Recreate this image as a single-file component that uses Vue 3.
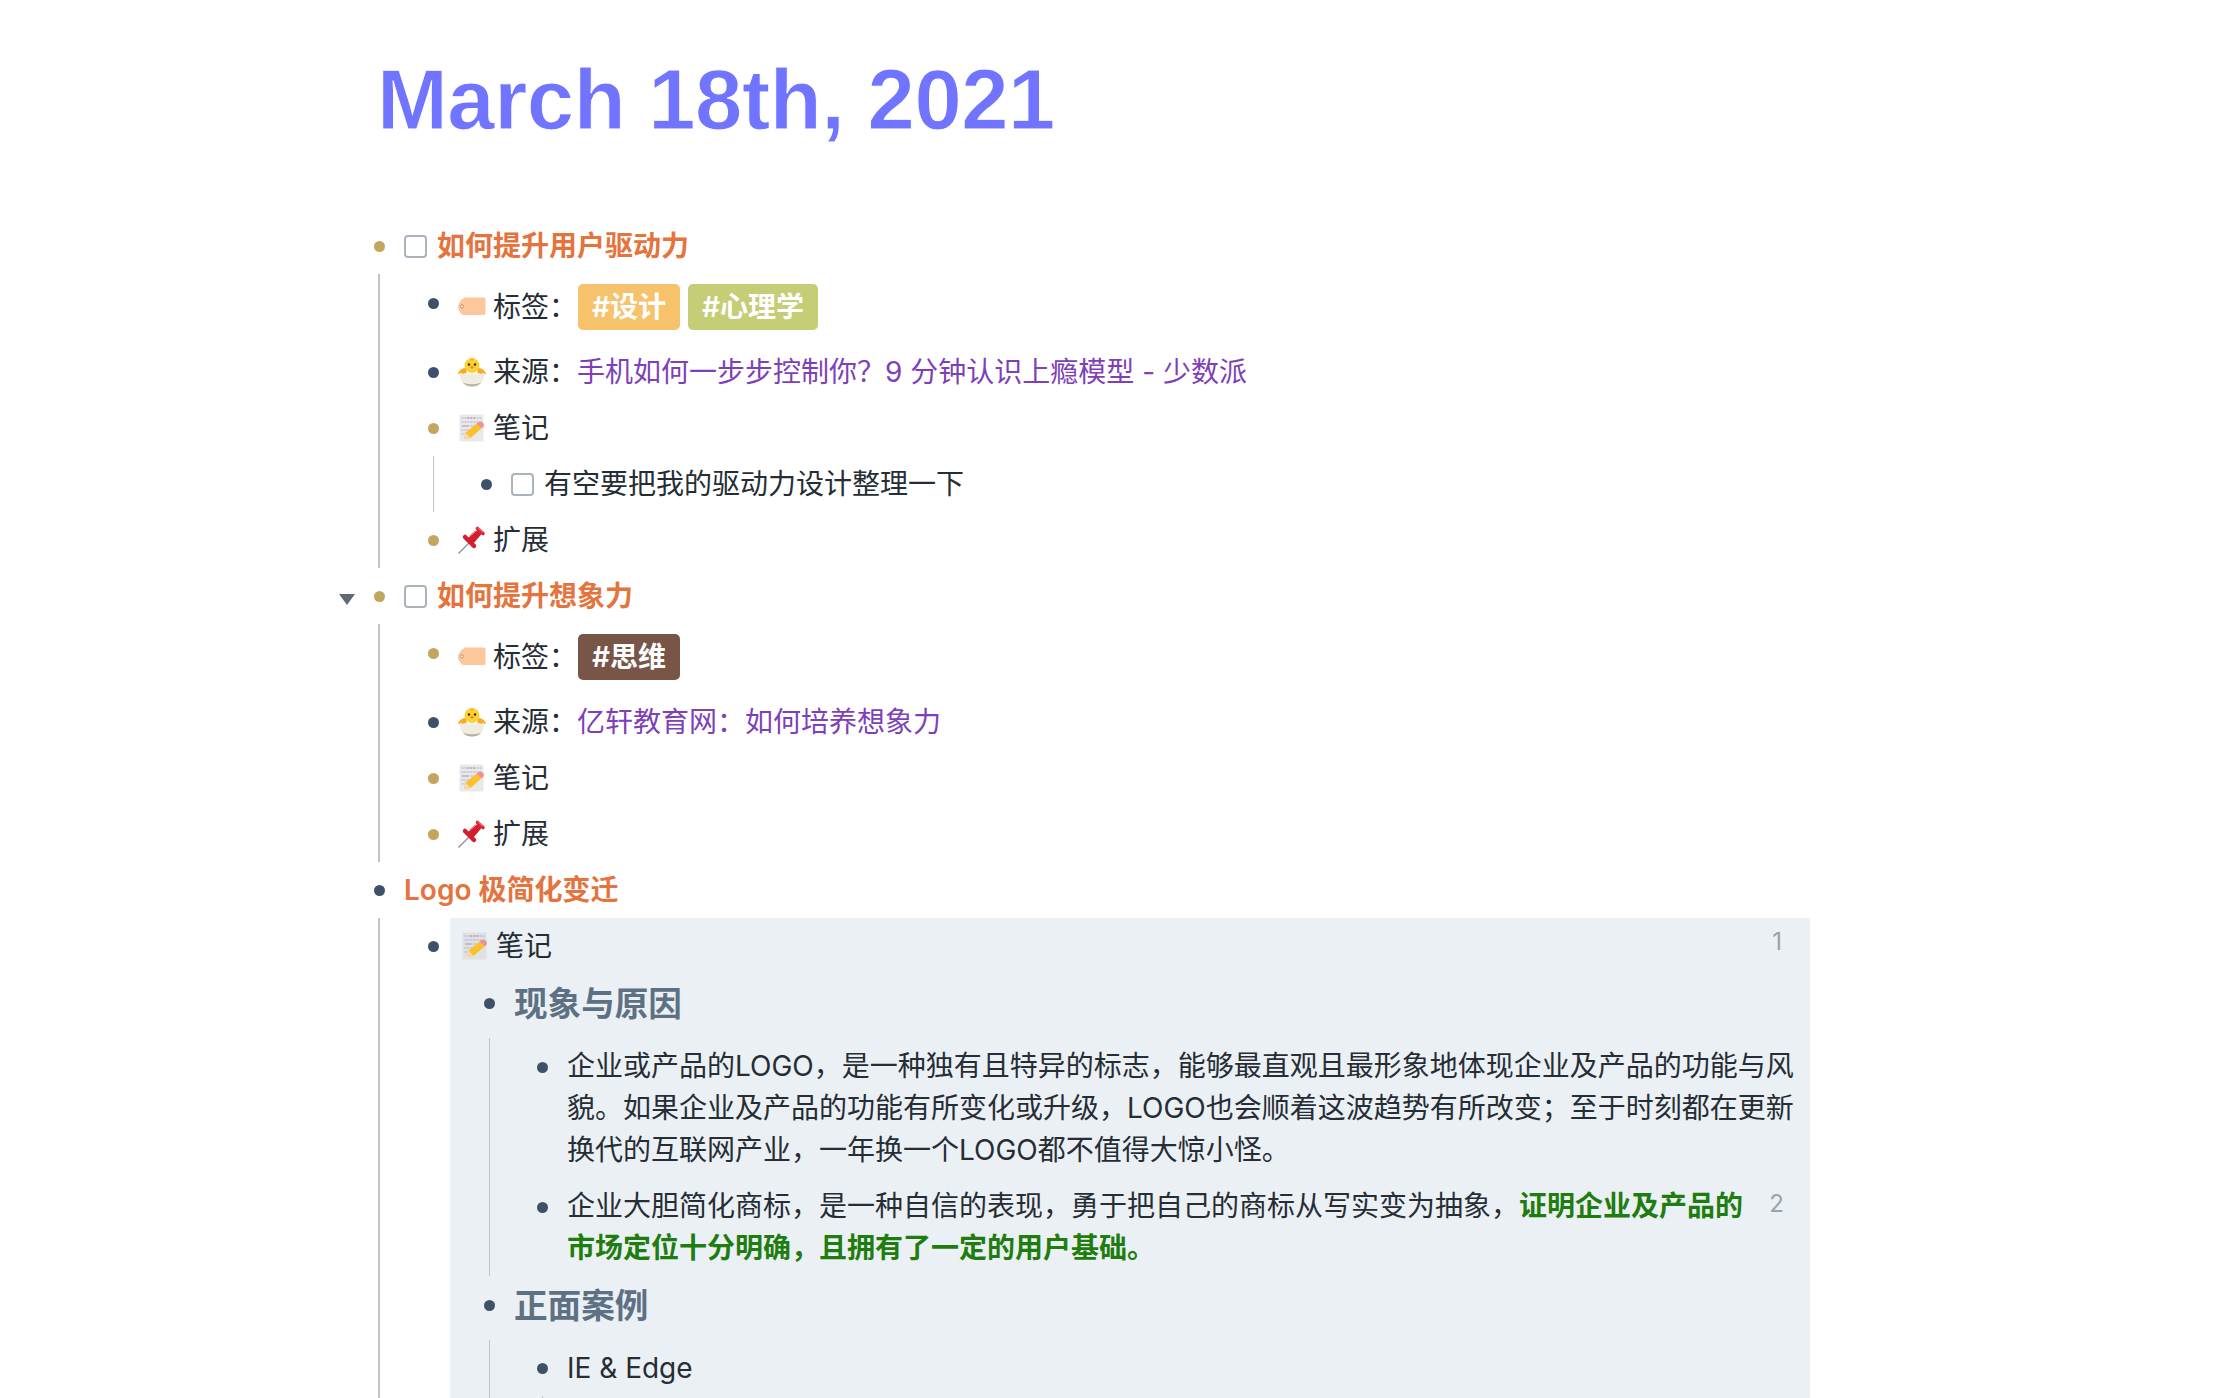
<script setup>
</script>

<template>
  <div class="page">
    <h1 class="title">March 18th, 2021</h1>
    <div class="tree">
      <!-- 如何提升用户驱动力 -->
      <div class="row">
        <span class="dot gold"></span>
        <div class="line"><span class="check"></span><b class="orange">如何提升用户驱动力</b></div>
      </div>
      <div class="kids">
        <div class="row tagrow">
          <span class="dot"></span>
          <div class="line">
            <svg class="emoji" viewBox="0 0 28 28"><path d="M6 4.500h20a1.500 1.500 0 0 1 1.500 1.500v14.500a1.500 1.500 0 0 1-1.500 1.500H6c-1.500 0-2-.5-3-1.500l-2-3c-.6-1-1-2-1-3.500s.4-2.500 1-3.500l2-3c1-1.200 1.500-2 3-2z" fill="#fcc89b"/><circle cx="4" cy="13.300" r="1.500" fill="#fff" stroke="#b8735a" stroke-width=".8"/></svg>
            <span>标签：</span>
            <span class="tags"><b class="tag yellow">#设计</b><b class="tag olive">#心理学</b></span>
          </div>
        </div>
        <div class="row">
          <span class="dot"></span>
          <div class="line">
            <svg class="emoji tall" viewBox="0 0 28 28"><circle cx="14" cy="7.500" r="7.500" fill="#fbd233"/><path d="M12.500-.8l1.300 2.300 1.600-2.300-.2 3.300h-2.700z" fill="#f5b12a"/><circle cx="11" cy="6.500" r="1.200" fill="#3b2a1a"/><circle cx="17" cy="6.500" r="1.200" fill="#3b2a1a"/><path d="M11.800 9l2.200-1.100L16.200 9 14 11z" fill="#ef8a1c"/><path d="M0 16c1-4 5-6.500 8-5.500l1 5zM28 16c-1-4-5-6.500-8-5.500l-1 5z" fill="#f9ab22"/><path d="M2 14.500l3 2 3.200-2 2.900 2 2.900-2 2.900 2 2.900-2 3.200 2 3-2c1.300 8-4.500 14-12 14S.7 22.500 2 14.500z" fill="#f1ece1"/><path d="M4.500 24c3.500 3 15.500 3 19 0-2 3-5.500 4.500-9.500 4.500S6.500 27 4.500 24z" fill="#b9b19f"/></svg>
            <span>来源：</span><a class="link">手机如何一步步控制你？9 分钟认识上瘾模型 - 少数派</a>
          </div>
        </div>
        <div class="row">
          <span class="dot gold"></span>
          <div class="line">
            <svg class="emoji" viewBox="0 0 28 28"><rect x="1.500" y="0.500" width="24" height="27" fill="#e9e9e9"/><path d="M3.500 4h20M3.500 8h20M3.500 12h15M3.500 16h10M3.500 20h7" stroke="#9fb0d4" stroke-width="1.100" stroke-dasharray="2 1"/><path d="M9 4h8M5 12h6" stroke="#d98c8c" stroke-width="1.100" stroke-dasharray="2 1"/><path d="M6 25l1.500-6.500L20 8.500c1.300-1.200 3.500-1 4.700.2s1.500 3 .3 4.300L12.500 24z" fill="#fbc02d"/><path d="M20 8.500c1.300-1.200 3.500-1 4.700.2s1.500 3 .3 4.300l-1.400 1.300-5-4.700z" fill="#ee8ea2"/><path d="M6 25l1.500-6.500 5 5.500z" fill="#f3d9b0"/></svg>
            <span>笔记</span>
          </div>
        </div>
        <div class="kids">
          <div class="row">
            <span class="dot"></span>
            <div class="line"><span class="check"></span><span>有空要把我的驱动力设计整理一下</span></div>
          </div>
        </div>
        <div class="row">
          <span class="dot gold"></span>
          <div class="line">
            <svg class="emoji" viewBox="0 0 28 28"><path d="M0.500 27.500L11 17" stroke="#87909e" stroke-width="1.300"/><path d="M7 11l9 9" stroke="#d21f2c" stroke-width="4.500" stroke-linecap="round"/><path d="M19.500 4l4 4-8 9.500-5.500-5.500z" fill="#d21f2c"/><path d="M19.500 2.500l5.500 5" stroke="#dc2530" stroke-width="3.600" stroke-linecap="round"/><path d="M20 1.800l4.500 4M12 10l5.500-5" stroke="#f4707a" stroke-width="1.100" stroke-linecap="round"/></svg>
            <span>扩展</span>
          </div>
        </div>
      </div>

      <!-- 如何提升想象力 -->
      <div class="row">
        <span class="fold"></span>
        <span class="dot gold"></span>
        <div class="line"><span class="check"></span><b class="orange">如何提升想象力</b></div>
      </div>
      <div class="kids">
        <div class="row tagrow">
          <span class="dot gold"></span>
          <div class="line">
            <svg class="emoji" viewBox="0 0 28 28"><path d="M6 4.500h20a1.500 1.500 0 0 1 1.500 1.500v14.500a1.500 1.500 0 0 1-1.500 1.500H6c-1.500 0-2-.5-3-1.500l-2-3c-.6-1-1-2-1-3.500s.4-2.500 1-3.500l2-3c1-1.200 1.500-2 3-2z" fill="#fcc89b"/><circle cx="4" cy="13.300" r="1.500" fill="#fff" stroke="#b8735a" stroke-width=".8"/></svg>
            <span>标签：</span>
            <span class="tags"><b class="tag brown">#思维</b></span>
          </div>
        </div>
        <div class="row">
          <span class="dot"></span>
          <div class="line">
            <svg class="emoji tall" viewBox="0 0 28 28"><circle cx="14" cy="7.500" r="7.500" fill="#fbd233"/><path d="M12.500-.8l1.300 2.300 1.600-2.300-.2 3.300h-2.700z" fill="#f5b12a"/><circle cx="11" cy="6.500" r="1.200" fill="#3b2a1a"/><circle cx="17" cy="6.500" r="1.200" fill="#3b2a1a"/><path d="M11.800 9l2.200-1.100L16.200 9 14 11z" fill="#ef8a1c"/><path d="M0 16c1-4 5-6.500 8-5.500l1 5zM28 16c-1-4-5-6.500-8-5.500l-1 5z" fill="#f9ab22"/><path d="M2 14.500l3 2 3.200-2 2.900 2 2.900-2 2.900 2 2.900-2 3.200 2 3-2c1.300 8-4.500 14-12 14S.7 22.500 2 14.500z" fill="#f1ece1"/><path d="M4.500 24c3.500 3 15.500 3 19 0-2 3-5.500 4.500-9.500 4.500S6.500 27 4.500 24z" fill="#b9b19f"/></svg>
            <span>来源：</span><a class="link">亿轩教育网：如何培养想象力</a>
          </div>
        </div>
        <div class="row">
          <span class="dot gold"></span>
          <div class="line">
            <svg class="emoji" viewBox="0 0 28 28"><rect x="1.500" y="0.500" width="24" height="27" fill="#e9e9e9"/><path d="M3.500 4h20M3.500 8h20M3.500 12h15M3.500 16h10M3.500 20h7" stroke="#9fb0d4" stroke-width="1.100" stroke-dasharray="2 1"/><path d="M9 4h8M5 12h6" stroke="#d98c8c" stroke-width="1.100" stroke-dasharray="2 1"/><path d="M6 25l1.500-6.500L20 8.500c1.300-1.200 3.500-1 4.700.2s1.500 3 .3 4.300L12.500 24z" fill="#fbc02d"/><path d="M20 8.500c1.300-1.200 3.500-1 4.700.2s1.500 3 .3 4.300l-1.400 1.300-5-4.700z" fill="#ee8ea2"/><path d="M6 25l1.500-6.500 5 5.500z" fill="#f3d9b0"/></svg>
            <span>笔记</span>
          </div>
        </div>
        <div class="row">
          <span class="dot gold"></span>
          <div class="line">
            <svg class="emoji" viewBox="0 0 28 28"><path d="M0.500 27.500L11 17" stroke="#87909e" stroke-width="1.300"/><path d="M7 11l9 9" stroke="#d21f2c" stroke-width="4.500" stroke-linecap="round"/><path d="M19.500 4l4 4-8 9.500-5.500-5.500z" fill="#d21f2c"/><path d="M19.500 2.500l5.500 5" stroke="#dc2530" stroke-width="3.600" stroke-linecap="round"/><path d="M20 1.800l4.500 4M12 10l5.500-5" stroke="#f4707a" stroke-width="1.100" stroke-linecap="round"/></svg>
            <span>扩展</span>
          </div>
        </div>
      </div>

      <!-- Logo 极简化变迁 -->
      <div class="row">
        <span class="dot"></span>
        <div class="line"><b class="orange">Logo 极简化变迁</b></div>
      </div>
      <div class="kids">
        <div class="blockrow">
          <span class="dot"></span>
          <div class="panel">
            <div class="line panelhead">
              <svg class="emoji" viewBox="0 0 28 28"><rect x="1.500" y="0.500" width="24" height="27" fill="#dfe1e3"/><path d="M3.500 4h20M3.500 8h20M3.500 12h15M3.500 16h10M3.500 20h7" stroke="#9fb0d4" stroke-width="1.100" stroke-dasharray="2 1"/><path d="M9 4h8M5 12h6" stroke="#d98c8c" stroke-width="1.100" stroke-dasharray="2 1"/><path d="M6 25l1.500-6.500L20 8.500c1.300-1.200 3.500-1 4.700.2s1.500 3 .3 4.300L12.500 24z" fill="#fbc02d"/><path d="M20 8.500c1.300-1.200 3.500-1 4.700.2s1.500 3 .3 4.300l-1.400 1.300-5-4.700z" fill="#ee8ea2"/><path d="M6 25l1.500-6.500 5 5.500z" fill="#f3d9b0"/></svg>
              <span>笔记</span>
              <span class="refs first">1</span>
            </div>
            <div class="panelbody">
              <div class="row headrow">
                <span class="dot"></span>
                <div class="line heading">现象与原因</div>
              </div>
              <div class="kids">
                <div class="row para">
                  <span class="dot"></span>
                  <div class="text">企业或产品的LOGO，是一种独有且特异的标志，能够最直观且最形象地体现企业及产品的功能与风貌。如果企业及产品的功能有所变化或升级，LOGO也会顺着这波趋势有所改变；至于时刻都在更新换代的互联网产业，一年换一个LOGO都不值得大惊小怪。</div>
                </div>
                <div class="row para">
                  <span class="dot"></span>
                  <div class="text narrow">企业大胆简化商标，是一种自信的表现，勇于把自己的商标从写实变为抽象，<b class="green">证明企业及产品的市场定位十分明确，且拥有了一定的用户基础。</b></div>
                  <span class="refs second">2</span>
                </div>
              </div>
              <div class="row headrow">
                <span class="dot"></span>
                <div class="line heading">正面案例</div>
              </div>
              <div class="kids">
                <div class="row">
                  <span class="dot"></span>
                  <div class="line">IE &amp; Edge</div>
                </div>
                <div class="kids filler"></div>
              </div>
            </div>
          </div>
        </div>
      </div>
    </div>
  </div>
</template>

<style>
html, body { margin: 0; height: 1398px; overflow: hidden; background: #fff; }
</style>

<style scoped>
.page {
  height: 1398px;
  overflow: hidden;
  font-family: Inter, "Noto Sans CJK SC", sans-serif;
  font-size: 28px;
  color: #262d35;
}
.title {
  margin: 0;
  padding: 49px 0 0 377px;
  height: 218px;
  box-sizing: border-box;
  font-family: "Liberation Sans", sans-serif;
  font-size: 85px;
  line-height: 102px;
  font-weight: 700;
  letter-spacing: -0.450px;
  color: #7074ff;
  -webkit-text-stroke: 1px #fff;
}
.tree { margin-left: 366px; width: 1444px; }
.row { position: relative; display: flex; padding: 8px 0; }
.dot {
  position: absolute;
  left: 7.500px;
  top: 22.500px;
  width: 11px;
  height: 11px;
  border-radius: 50%;
  background: #3f5168;
}
.dot.gold { background: #c3a55e; }
.fold {
  position: absolute;
  left: -27px;
  top: 26px;
  width: 0;
  height: 0;
  border-left: 8px solid transparent;
  border-right: 8px solid transparent;
  border-top: 11px solid #5f6a75;
}
.line {
  display: flex;
  align-items: center;
  margin-left: 38px;
  min-height: 40px;
  line-height: 40px;
  white-space: nowrap;
}
.check {
  flex: none;
  width: 19px;
  height: 19px;
  margin-right: 10px;
  border: 2px solid #a9b4bf;
  border-radius: 4px;
  background: #fff;
}
.orange { font-weight: 600; color: #e5733d; }
.kids {
  margin-left: 12px;
  padding-left: 42px;
  border-left: 2px solid #bcc5cc;
}
.kids > .row { margin-left: -2px; }
.kids .kids { margin-left: 11px; padding-left: 41px; border-left-width: 1.500px; }
.emoji { width: 28px; height: 28px; margin-right: 7px; flex: none; overflow: visible; }
.tagrow { padding: 10px 0 14px; }
.tagrow .dot { top: 23.500px; }
.tags { display: flex; gap: 8px; margin-left: 1px; }
.tag {
  height: 46px;
  line-height: 46px;
  padding: 0 14px;
  border-radius: 5px;
  font-weight: 600;
  color: #fff;
}
.yellow { background: #f6c26c; }
.olive { background: #c5cd77; }
.brown { background: #795548; }
.link { color: #7e3fb8; }
.blockrow { position: relative; margin-left: -2px; }
.panel {
  margin-left: 30px;
  background: #ebf0f4;
  min-height: 600px;
}
.panelhead { margin-left: 0; padding: 8px 0 8px 11px; position: relative; }
.panelbody { padding-left: 26px; }
.panelbody > .kids { margin-left: 13px; border-left-width: 1.500px; padding-left: 41px; }
.refs {
  position: absolute;
  font-size: 24px;
  line-height: 28px;
  color: #9aa3aa;
}
.refs.first { right: 28px; top: 10px; }
.refs.second { right: 26px; top: 12px; }
.headrow { padding: 6px 0 10px; }
.headrow .dot { top: 23.500px; }
.heading {
  font-size: 33.600px;
  line-height: 48px;
  font-weight: 600;
  color: #5e7083;
}
.para { padding: 7px 0; }
.para .dot { top: 23.500px; }
.text { margin-left: 38px; line-height: 42px; width: 1232px; }
.text.narrow { width: 1190px; }
.green { font-weight: 600; color: #1f7d10; }
.panelbody .filler { height: 60px; margin-left: 11px; }
</style>
